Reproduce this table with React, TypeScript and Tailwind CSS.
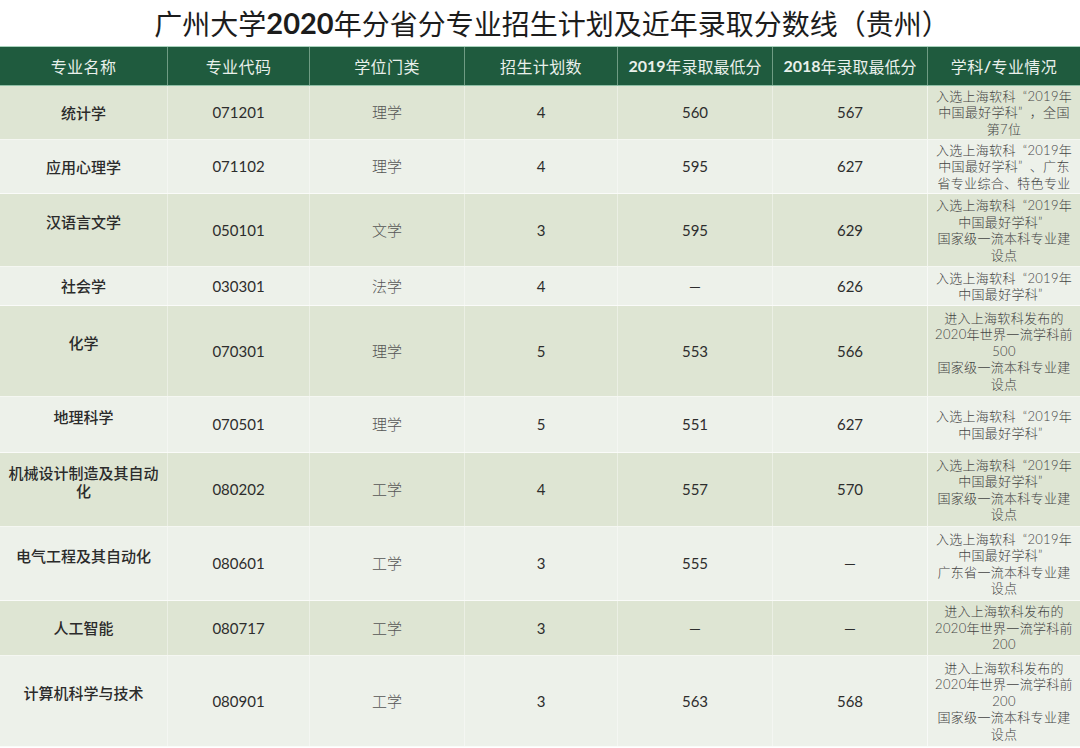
import React from 'react'

type Row = {
    name: string[]
    code: string
    cat: string
    plan: string
    s2019: string
    s2018: string
    notes: string[]
    h: string
    up?: boolean
}

const rows: Row[] = [
    { name: ['统计学'], code: '071201', cat: '理学', plan: '4', s2019: '560', s2018: '567', notes: ['入选上海软科“2019年', '中国最好学科”，全国', '第7位'], h: 'h-[54px]' },
    { name: ['应用心理学'], code: '071102', cat: '理学', plan: '4', s2019: '595', s2018: '627', notes: ['入选上海软科“2019年', '中国最好学科”、广东', '省专业综合、特色专业'], h: 'h-[54px]' },
    { name: ['汉语言文学'], code: '050101', cat: '文学', plan: '3', s2019: '595', s2018: '629', notes: ['入选上海软科“2019年', '中国最好学科”', '国家级一流本科专业建', '设点'], h: 'h-[73px]', up: true },
    { name: ['社会学'], code: '030301', cat: '法学', plan: '4', s2019: '—', s2018: '626', notes: ['入选上海软科“2019年', '中国最好学科”'], h: 'h-[39px]' },
    { name: ['化学'], code: '070301', cat: '理学', plan: '5', s2019: '553', s2018: '566', notes: ['进入上海软科发布的', '2020年世界一流学科前', '500', '国家级一流本科专业建', '设点'], h: 'h-[91px]', up: true },
    { name: ['地理科学'], code: '070501', cat: '理学', plan: '5', s2019: '551', s2018: '627', notes: ['入选上海软科“2019年', '中国最好学科”'], h: 'h-[56px]', up: true },
    { name: ['机械设计制造及其自动', '化'], code: '080202', cat: '工学', plan: '4', s2019: '557', s2018: '570', notes: ['入选上海软科“2019年', '中国最好学科”', '国家级一流本科专业建', '设点'], h: 'h-[74px]', up: true },
    { name: ['电气工程及其自动化'], code: '080601', cat: '工学', plan: '3', s2019: '555', s2018: '—', notes: ['入选上海软科“2019年', '中国最好学科”', '广东省一流本科专业建', '设点'], h: 'h-[74px]', up: true },
    { name: ['人工智能'], code: '080717', cat: '工学', plan: '3', s2019: '—', s2018: '—', notes: ['进入上海软科发布的', '2020年世界一流学科前', '200'], h: 'h-[55px]' },
    { name: ['计算机科学与技术'], code: '080901', cat: '工学', plan: '3', s2019: '563', s2018: '568', notes: ['进入上海软科发布的', '2020年世界一流学科前', '200', '国家级一流本科专业建', '设点'], h: 'h-[91px]', up: true },
]

const cols = 'grid grid-cols-[168px_142px_155px_153px_155px_155px_152px]'
const cjk = "font-['Noto_Sans_CJK_SC',sans-serif]"
const num = "font-['Lato','Noto_Sans_CJK_SC',sans-serif]"

// quote marks sit on one side of a full-width cell, as in the source sheet
function Note({ text }: { text: string }) {
    const parts = text.split(/([“”])/)
    return (
        <span>
            {parts.map((p, i) => {
                if (p === '“') return <span key={i} className="pl-[7px]">{p}</span>
                if (p === '”') return <span key={i} className="pr-[7px]">{p}</span>
                return <span key={i}>{p}</span>
            })}
        </span>
    )
}

export default function App() {
    return (
        <div className="w-[1080px] h-[748px] overflow-hidden bg-white">
            {/* Title */}
            <div className={`h-[46px] flex items-center justify-center pl-6 text-[28px] text-[#1c1c1c] ${cjk}`}>
                广州大学<span className={`font-bold ${num} text-[29px]`}>2020</span>年分省分专业招生计划及近年录取分数线（贵州）
            </div>

            {/* Header */}
            <div className={`${cols} h-[40px] bg-[#1f5b3e] border-t border-[#a9d3bd] border-b border-b-[#8fbfa5] text-[16px] text-[#e9f0eb] ${cjk}`}>
                {['专业名称', '专业代码', '学位门类', '招生计划数'].map((t) => (
                    <div key={t} className="flex items-center justify-center border-r border-[#6f9c84] tracking-wide">{t}</div>
                ))}
                <div className="flex items-center justify-center border-r border-[#6f9c84]">
                    <span className={`font-bold ${num}`}>2019</span>年录取最低分
                </div>
                <div className="flex items-center justify-center border-r border-[#6f9c84]">
                    <span className={`font-bold ${num}`}>2018</span>年录取最低分
                </div>
                <div className="flex items-center justify-center tracking-wide">
                    学科<span className={`font-bold ${num}`}>/</span>专业情况
                </div>
            </div>

            {/* Body */}
            {rows.map((r, i) => (
                <div
                    key={r.code}
                    className={`${cols} ${r.h} border-b border-white/70 ${i % 2 === 0 ? 'bg-[#dee5d3]' : 'bg-[#edf1ea]'}`}
                >
                    <div className={`flex flex-col items-center justify-center border-r border-white/40 text-[15px] leading-[18px] font-medium text-[#2b2b2b] ${num} ${r.up ? 'pb-4' : ''}`}>
                        {r.name.map((n) => (
                            <span key={n}>{n}</span>
                        ))}
                    </div>
                    <div className={`flex items-center justify-center border-r border-white/40 text-[15px] text-[#2d2d2d] ${num}`}>{r.code}</div>
                    <div className={`flex items-center justify-center border-r border-white/40 text-[15px] font-light text-[#555] ${cjk}`}>{r.cat}</div>
                    <div className={`flex items-center justify-center border-r border-white/40 text-[15px] text-[#2d2d2d] ${num}`}>{r.plan}</div>
                    <div className={`flex items-center justify-center border-r border-white/40 text-[15px] text-[#2d2d2d] ${num}`}>{r.s2019}</div>
                    <div className={`flex items-center justify-center border-r border-white/60 text-[15px] text-[#2d2d2d] ${num}`}>{r.s2018}</div>
                    <div className={`flex flex-col items-center justify-center text-[13px] leading-[16.5px] font-light text-[#444] whitespace-nowrap tracking-[0.3px] ${num}`}>
                        {r.notes.map((n, k) => (
                            <Note key={k} text={n} />
                        ))}
                    </div>
                </div>
            ))}
        </div>
    )
}
